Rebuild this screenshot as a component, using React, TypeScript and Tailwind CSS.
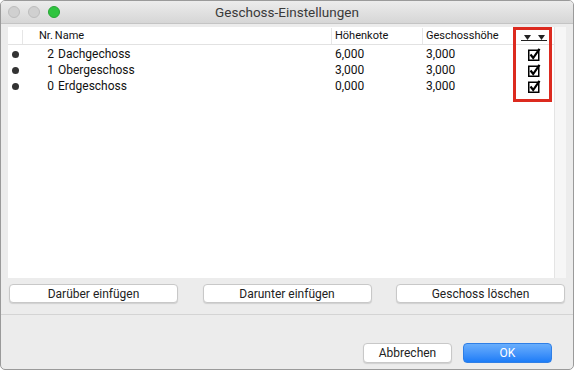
import React from 'react';

const rows = [
  { nr: 2, name: 'Dachgechoss', kote: '6,000', hoehe: '3,000' },
  { nr: 1, name: 'Obergeschoss', kote: '3,000', hoehe: '3,000' },
  { nr: 0, name: 'Erdgeschoss', kote: '0,000', hoehe: '3,000' },
];

function CheckBox() {
  return (
    <svg width="13" height="13" viewBox="0 0 13 13">
      <rect x="0.75" y="2.25" width="10" height="10" fill="white" stroke="black" strokeWidth="1.5" />
      <path d="M2.5 6.5 L5.2 10 L11.5 0.8" fill="none" stroke="black" strokeWidth="2.2" />
    </svg>
  );
}

function Button({ label, className }: { label: string; className: string }) {
  return (
    <div
      className={`flex items-center justify-center rounded-[4px] bg-white border border-[#c8c8c8] shadow-[0_1px_1px_rgba(0,0,0,0.12)] text-[12px] text-[#222] ${className}`}
    >
      {label}
    </div>
  );
}

export default function App() {
  return (
    <div
      className="w-[574px] h-[370px] bg-[#ececec] border border-[#9a9a9a] rounded-[5px] overflow-hidden flex flex-col"
      style={{ fontFamily: 'Roboto, "Liberation Sans", sans-serif' }}
    >
      <div className="relative h-[23px] shrink-0 bg-gradient-to-b from-[#ececec] to-[#d6d6d6] border-b border-[#c4c4c4] flex items-center justify-center">
        <div className="absolute left-[7px] top-[5px] flex gap-[8px]">
          <div className="w-[12px] h-[12px] rounded-full bg-[#d0d0d0] border border-[#bdbdbd]" />
          <div className="w-[12px] h-[12px] rounded-full bg-[#d0d0d0] border border-[#bdbdbd]" />
          <div className="w-[12px] h-[12px] rounded-full bg-[#2fc43f] border border-[#26a534]" />
        </div>
        <span className="text-[13.5px] text-[#3a3a3a]">Geschoss-Einstellungen</span>
      </div>

      <div className="flex pl-[7px] pr-[7px] pt-[3px]">
        <div className="relative flex-1 h-[251px] bg-white">
          <div className="flex h-[18px] items-end border-b border-[#e2e2e2] text-[11px] text-[#111]">
            <div className="w-[15px] h-[14px] border-r border-[#e6e6e6]" />
            <div className="w-[308px] pl-[16px] flex">
              <span>Nr.</span>
              <span className="ml-[2px]">Name</span>
            </div>
            <div className="w-[91px] pl-[3px] border-l border-[#e6e6e6]">Höhenkote</div>
            <div className="w-[91px] pl-[3px] border-l border-[#e6e6e6]">Geschosshöhe</div>
            <div className="flex-1 border-l border-[#e6e6e6] h-[14px] flex items-center justify-center">
              <div className="flex flex-col items-center">
                <div className="flex gap-[7px] mt-[1px]">
                  <svg width="7" height="5" viewBox="0 0 7 5"><path d="M0 0 H7 L3.5 5 Z" fill="#222" /></svg>
                  <svg width="7" height="5" viewBox="0 0 7 5"><path d="M0 0 H7 L3.5 5 Z" fill="#222" /></svg>
                </div>
                <div className="w-[26px] h-px bg-[#222]" />
              </div>
            </div>
          </div>
          <div className="pt-[1px]">
            {rows.map((r) => (
              <div key={r.nr} className="flex h-[16px] items-center text-[12px] text-[#111]">
                <div className="w-[15px] flex justify-center">
                  <div className="w-[7px] h-[7px] rounded-full bg-[#333]" />
                </div>
                <div className="w-[308px] flex">
                  <span className="w-[31px] text-right">{r.nr}</span>
                  <span className="ml-[4px]">{r.name}</span>
                </div>
                <div className="w-[91px] pl-[4px]">{r.kote}</div>
                <div className="w-[91px] pl-[4px]">{r.hoehe}</div>
                <div className="flex-1 flex justify-center pl-[2px]">
                  <CheckBox />
                </div>
              </div>
            ))}
          </div>
          <div className="absolute left-[505px] top-[0px] w-[39px] h-[75px] border-[3px] border-[#dc2a1f]" />
        </div>
        <div className="w-[12px] h-[251px] bg-[#f6f6f6] border-l border-[#e4e4e4]" />
      </div>

      <div className="flex justify-between px-[8px] pt-[6px]">
        <Button label="Darüber einfügen" className="w-[169px] h-[19px]" />
        <Button label="Darunter einfügen" className="w-[169px] h-[19px]" />
        <Button label="Geschoss löschen" className="w-[169px] h-[19px]" />
      </div>

      <div className="mt-[11px] h-px bg-[#d4d4d4]" />

      <div className="flex justify-end gap-[11px] pr-[21px] pt-[28px]">
        <Button label="Abbrechen" className="w-[89px] h-[20px]" />
        <div className="w-[89px] h-[20px] rounded-[4px] bg-gradient-to-b from-[#69aefc] to-[#1b7cf7] border border-[#2f7fe6] flex items-center justify-center text-[12px] text-white">
          OK
        </div>
      </div>
    </div>
  );
}
